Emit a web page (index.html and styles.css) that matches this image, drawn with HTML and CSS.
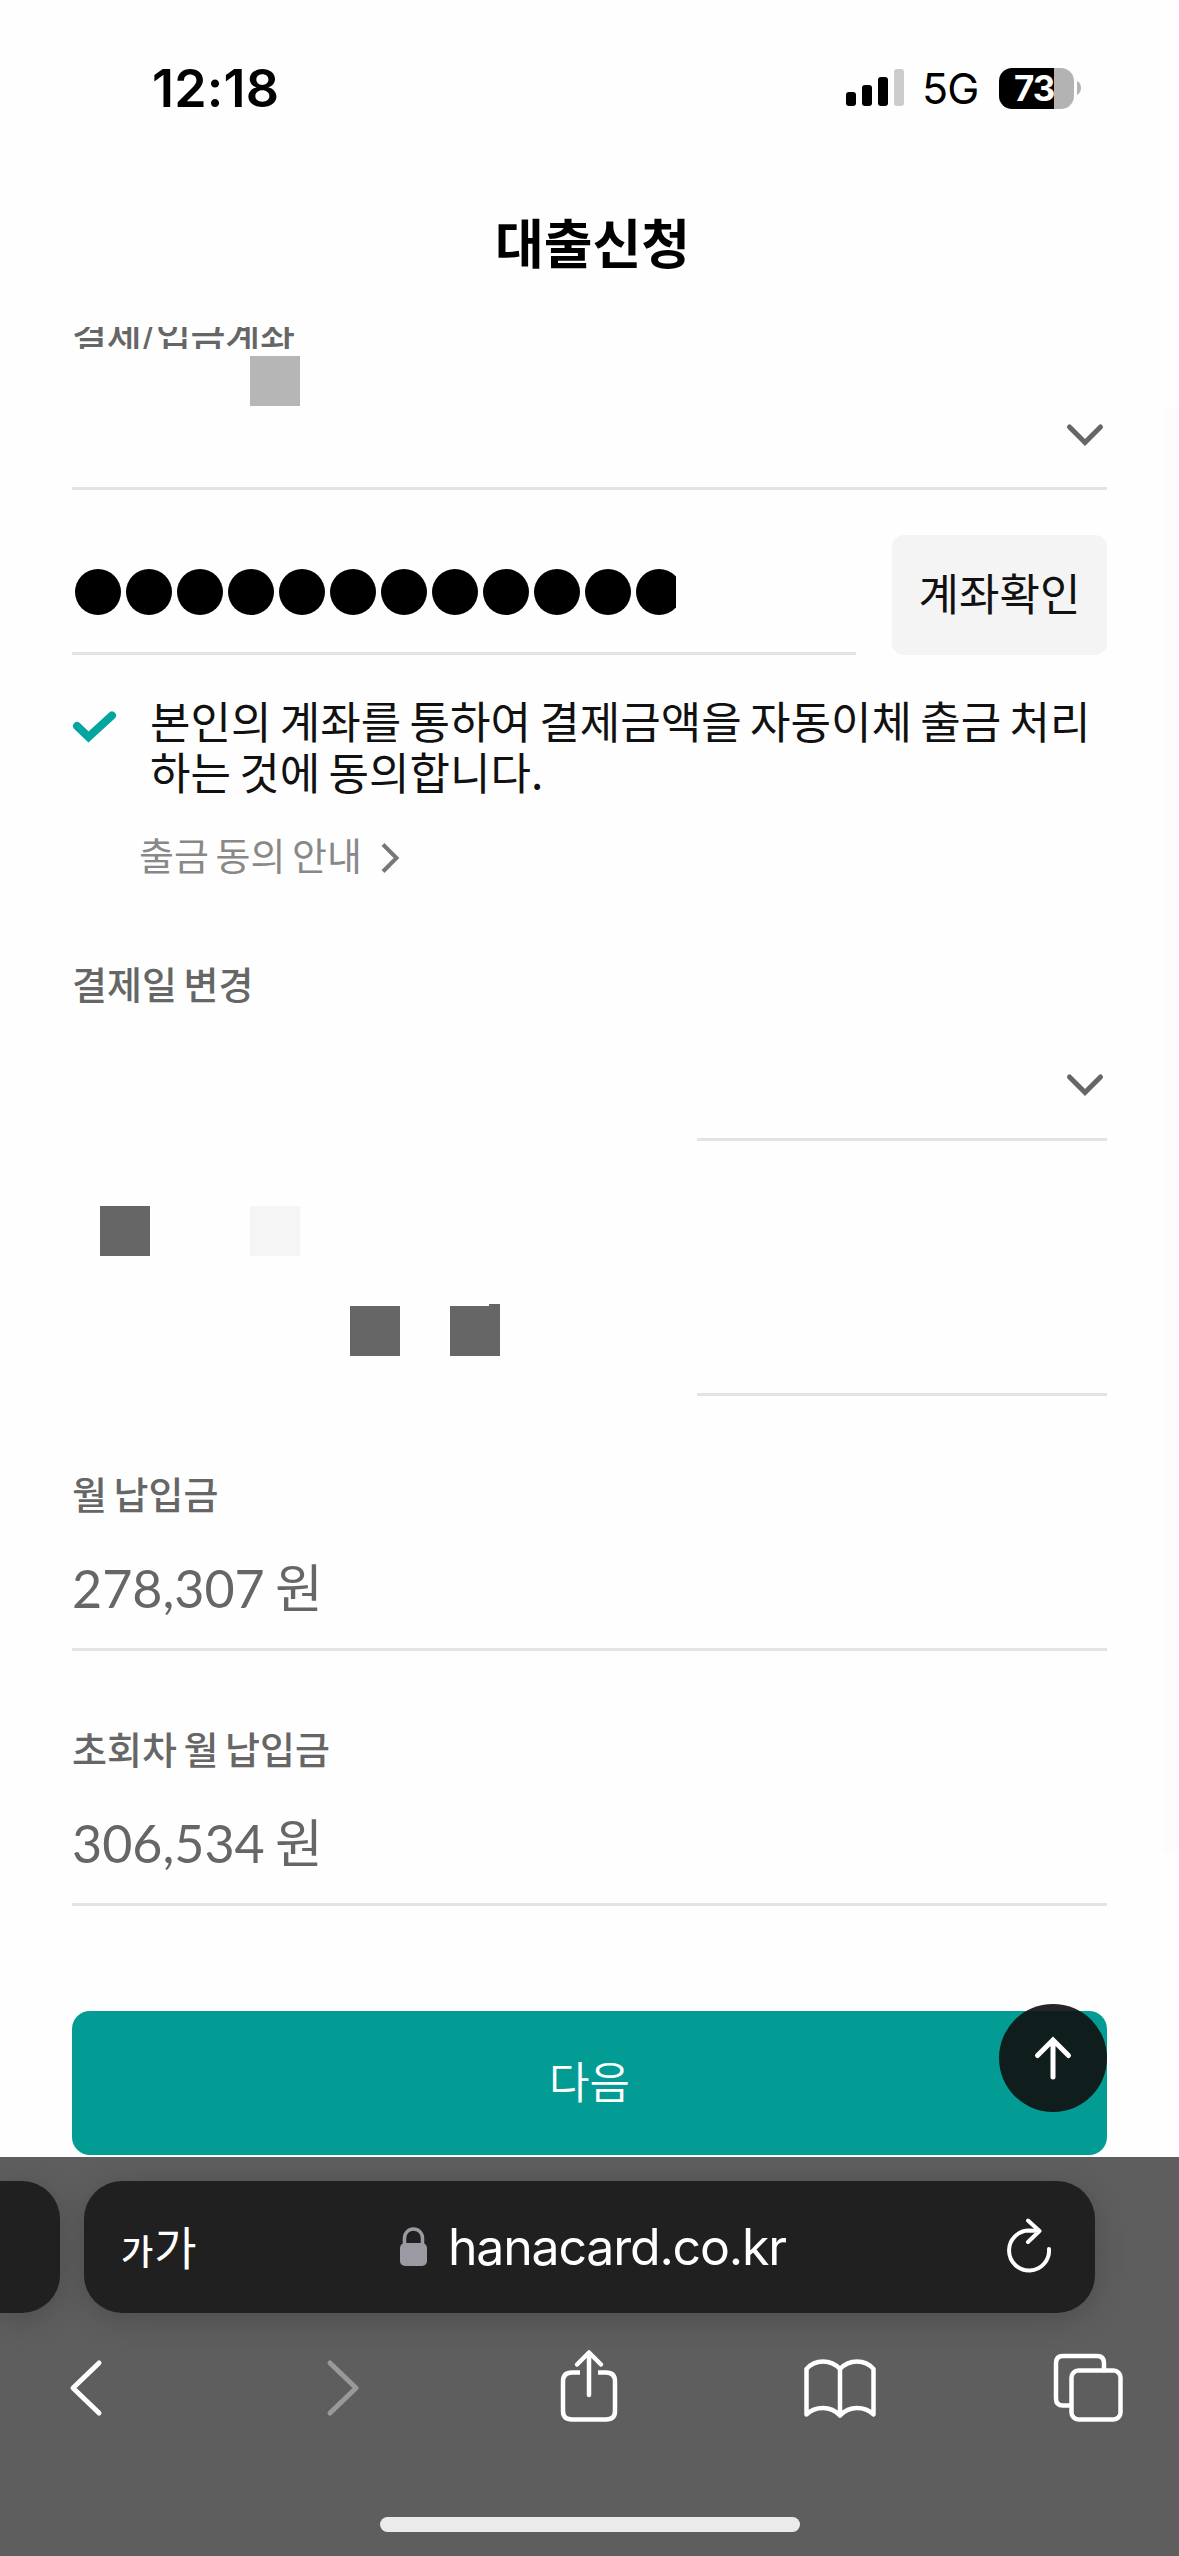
FILE: index.html
```html
<!DOCTYPE html>
<html lang="ko">
<head>
<meta charset="utf-8">
<title>대출신청</title>
<link rel="stylesheet" href="styles.css">
</head>
<body>
<div class="screen">
  <header class="status">
    <span class="clock">12:18</span>
    <div class="status-right">
      <svg class="signal" viewBox="0 0 58 38"><rect x="0" y="23" width="10" height="14" rx="3"/><rect x="16" y="16" width="10" height="21" rx="3"/><rect x="32" y="8" width="10" height="29" rx="3"/><rect x="48" y="0" width="10" height="37" rx="3" fill="#ccc"/></svg>
      <span class="network">5G</span>
      <div class="battery"><span class="level">73</span></div>
      <svg class="nub" viewBox="0 0 4 14"><path d="M0 0Q4 2 4 7T0 14Z" fill="#b3b3b3"/></svg>
    </div>
  </header>
  <h1 class="title"><span>대출신청</span></h1>
  <main class="form">
    <div class="label cut"><span>결제/입금계좌</span></div>
    <div class="select account">
      <i class="mask"></i>
      <svg class="chevron" viewBox="0 0 36 22"><path d="M2.5 3 18 18.500 33.500 3"/></svg>
    </div>
    <div class="verify">
      <div class="secret"><div class="dots"><i></i><i></i><i></i><i></i><i></i><i></i><i></i><i></i><i></i><i></i><i></i><i></i></div></div>
      <button class="check-btn"><span>계좌확인</span></button>
    </div>
    <div class="agree">
      <svg class="tick" viewBox="0 0 44 32"><path d="M5 15 16.500 26 40 4.500"/></svg>
      <p><span>본인의 계좌를 통하여 결제금액을 자동이체 출금 처리</span><span>하는 것에 동의합니다.</span></p>
    </div>
    <a class="guide"><span>출금 동의 안내</span><svg viewBox="0 0 18 30"><path d="M2 1.500 15.500 15 2 28.500"/></svg></a>
    <div class="label day"><span>결제일 변경</span></div>
    <div class="select half"><svg class="chevron" viewBox="0 0 36 22"><path d="M2.500 3 18 18.500 33.500 3"/></svg></div>
    <div class="masked">
      <div class="masks"><i class="mask m1"></i><i class="mask m2"></i><i class="mask m3"></i><i class="mask m4"></i></div>
      <div class="blank"></div>
    </div>
    <div class="label monthly"><span>월 납입금</span></div>
    <div class="value"><span>278,307 원</span></div>
    <div class="label monthly"><span>초회차 월 납입금</span></div>
    <div class="value"><span>306,534 원</span></div>
    <div class="submit-wrap">
      <button class="submit"><span>다음</span></button>
      <div class="fab"><svg viewBox="0 0 108 108"><path d="M54 73V36M38.500 51.500 54 36 69.500 51.500"/></svg></div>
    </div>
  </main>
  <i class="scroll-edge"></i>
  <footer class="browser">
    <div class="tabs">
      <div class="prev-tab"></div>
      <div class="address">
        <span class="aa"><small>가</small><span>가</span></span>
        <span class="host"><svg viewBox="0 0 28 40"><rect x="0" y="16" width="27" height="23" rx="5" fill="#9b9aa2"/><path d="M4.500 18V11a9 9 0 0 1 18 0V18" fill="none" stroke="#9b9aa2" stroke-width="3.500"/></svg><span>hanacard.co.kr</span></span>
        <svg class="reload" viewBox="0 0 46 56"><path d="M43 30A20 20 0 1 1 23 11.500L33 12M22 1.500 33.500 12 22 23"/></svg>
      </div>
    </div>
    <nav class="tools">
      <svg class="back" viewBox="0 0 34 56"><path d="M31 3 5 28 31 53"/></svg>
      <svg class="fwd" viewBox="0 0 34 56"><path d="M4 3 30 28 4 53"/></svg>
      <svg class="share" viewBox="0 0 58 74"><path stroke-linecap="butt" d="M20 22.500H12Q3 22.500 3 31.500V61Q3 69.500 12 69.500H46Q55 69.500 55 61V31.500Q55 22.500 46 22.500H38"/><path d="M29 45V3M17 14.500 29 2.500 41 14.500"/></svg>
      <svg class="book" viewBox="0 0 72 60"><path d="M36 11Q29 3.500 19 3.500T2.500 11V56.500Q9 50 19 50T36 57.500Q43 50 53 50T69.500 56.500V11Q63 3.500 53 3.500T36 11V57.500"/></svg>
      <svg class="pages" viewBox="0 0 68 68"><path d="M16 51.500H9Q2 51.500 2 44.500V9Q2 2 9 2H43Q50 2 50 9V16"/><rect x="17.500" y="16.500" width="49" height="49" rx="7"/></svg>
    </nav>
    <div class="home"></div>
  </footer>
</div>
</body>
</html>
```
FILE: styles.css
```css
* { box-sizing: border-box; }
body { margin: 0; background: #fefefe; font-family: "Noto Sans CJK KR", sans-serif; color: #111; }
i { display: block; }
svg { display: block; flex: none; overflow: visible; }
span { white-space: nowrap; }
button { border: 0; padding: 0; font: inherit; color: inherit; }
.screen { position: relative; width: 1179px; height: 2556px; overflow: hidden; display: flex; flex-direction: column; }

.status { height: 176px; padding: 0 98px 0 152px; display: flex; justify-content: space-between; align-items: center; font-family: Inter, sans-serif; color: #000; }
.clock { font-size: 52px; font-weight: 600; letter-spacing: .2px; }
.status-right { display: flex; align-items: center; }
.signal { width: 58px; height: 38px; }
.network { font-size: 43px; margin-left: 18px; width: 57px; letter-spacing: -1px; }
.battery { margin-left: 20px; width: 75px; height: 41px; border-radius: 13px; background: linear-gradient(90deg, #000 55px, #b3b3b3 55px); }
.level { display: block; color: #fff; font-size: 35px; line-height: 41px; font-weight: 700; padding-left: 15px; letter-spacing: -1px; }
.nub { width: 4px; height: 14px; margin-left: 3px; }

.title { margin: 0; height: 151px; line-height: 130px; text-align: center; font-size: 53px; font-weight: 700; color: #000; padding-left: 6px; }

.form { padding: 0 72px; }
.label { color: #666; font-size: 38px; font-weight: 500; line-height: 50px; word-spacing: -4px; }
.cut { height: 22px; overflow: hidden; display: flex; align-items: flex-end; }
.cut span { margin-bottom: -10px; letter-spacing: -.3px; }
.select { border-bottom: 3px solid #e3e3e3; display: flex; justify-content: space-between; align-items: flex-start; }
.chevron { width: 36px; height: 22px; margin-right: 4px; fill: none; stroke: #666; stroke-width: 5; stroke-linecap: round; }
.mask { width: 50px; height: 50px; background: #666; }
.account { height: 141px; padding-top: 7px; }
.account .mask { background: #b6b6b6; margin-left: 178px; }
.account .chevron { margin-top: 68px; }

.verify { display: flex; justify-content: space-between; margin-top: 45px; height: 120px; }
.secret { width: 784px; border-bottom: 3px solid #e3e3e3; padding: 34px 0 0 3px; }
.dots { display: flex; gap: 5px; width: 601px; overflow: hidden; }
.dots i { flex: none; width: 46px; height: 46px; border-radius: 50%; background: #000; }
.check-btn { width: 215px; padding-bottom: 7px; background: #f4f4f4; border-radius: 12px; font-size: 44px; }

.agree { display: flex; margin-top: 40px; height: 103px; }
.tick { width: 44px; height: 32px; margin-top: 16px; fill: none; stroke: #03a69e; stroke-width: 8; stroke-linecap: round; }
.agree p { margin: 0 0 0 34px; font-size: 44px; line-height: 51px; word-spacing: -4px; }
.agree p span { display: block; }
.guide { display: flex; align-items: center; margin: 25px 0 0 67px; height: 60px; color: #888; font-size: 38px; word-spacing: -4px; }
.guide svg { width: 18px; height: 30px; margin: 10px 0 0 19px; fill: none; stroke: #777; stroke-width: 4; }

.day { margin-top: 75px; }
.half { width: 410px; margin-left: auto; height: 133px; justify-content: flex-end; padding-top: 66px; }
.masked { display: flex; justify-content: space-between; height: 255px; }
.masks { padding: 65px 0 0 28px; display: grid; grid-template-columns: repeat(8, 50px); grid-auto-rows: 50px; }
.m1 { grid-area: 1 / 1; }
.m2 { grid-area: 1 / 4; background: #f5f5f5; }
.m3 { grid-area: 3 / 6; }
.m4 { grid-area: 3 / 8; clip-path: polygon(0 0, 39px 0, 39px -2px, 50px -2px, 50px 50px, 0 50px); box-shadow: 0 -2px #666; }
.blank { width: 410px; border-bottom: 3px solid #e3e3e3; }
.monthly { margin-top: 72px; }
.value { height: 133px; border-bottom: 3px solid #e3e3e3; font-family: Lato, "Noto Sans CJK KR", sans-serif; font-size: 52px; line-height: 140px; color: #666; word-spacing: -3px; }

.submit-wrap { position: relative; margin-top: 105px; }
.submit { display: block; width: 100%; height: 144px; padding-bottom: 7px; border-radius: 18px; background: #039c94; color: #fff; font-size: 44px; font-weight: 350; }
.fab { position: absolute; right: 0; top: -7px; width: 108px; height: 108px; border-radius: 50%; background: rgba(17, 17, 17, .91); }
.fab svg { fill: none; stroke: #fff; stroke-width: 5; stroke-linecap: round; }
.scroll-edge { position: absolute; right: 0; top: 408px; width: 16px; height: 1445px; background: #fcfcfc; }

.browser { position: absolute; left: 0; right: 0; top: 2157px; bottom: 0; background: #5e5e5e; color: #fff; font-family: Inter, "Noto Sans CJK KR", sans-serif; }
.tabs { display: flex; gap: 24px; padding-top: 24px; }
.prev-tab { width: 60px; height: 132px; background: #202020; border-radius: 0 38px 38px 0; box-shadow: 0 6px 30px rgba(0, 0, 0, .18); }
.address { width: 1011px; height: 132px; background: #202020; border-radius: 38px; box-shadow: 0 6px 30px rgba(0, 0, 0, .18); display: flex; align-items: center; padding: 0 43px 0 37px; }
.aa { display: flex; align-items: baseline; gap: 1px; width: 279px; margin-bottom: 4px; font-size: 46px; font-weight: 400; }
.aa small { font-size: 35px; font-weight: 500; }
.host { display: flex; align-items: center; font-size: 50px; gap: 20px; letter-spacing: -1.2px; }
.host svg { width: 28px; height: 40px; }
.reload { width: 46px; height: 56px; margin-left: auto; fill: none; stroke: #fff; stroke-width: 4; stroke-linecap: round; stroke-linejoin: round; }
.tools { display: flex; align-items: center; height: 74px; margin-top: 38px; padding-left: 68px; }
.tools svg { fill: none; stroke: #fff; stroke-width: 4.500; stroke-linecap: round; stroke-linejoin: round; }
.tools .back, .tools .fwd { width: 34px; height: 56px; stroke-width: 5; }
.tools .fwd { stroke: #999; margin-left: 224px; }
.share { width: 58px; height: 74px; margin: 0 0 2px 200px; }
.book { width: 72px; height: 60px; margin-left: 186px; }
.pages { width: 68px; height: 68px; margin-left: 178px; }
.home { width: 420px; height: 15px; margin: 92px auto 0; border-radius: 8px; background: #ebebeb; }
```
